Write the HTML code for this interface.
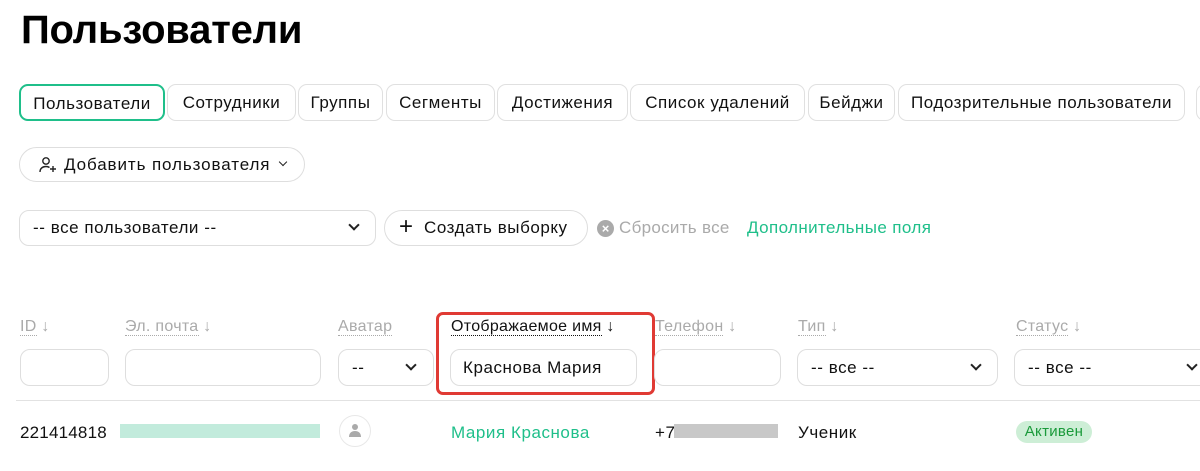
<!DOCTYPE html>
<html><head><meta charset="utf-8"><style>
*{box-sizing:border-box;margin:0;padding:0}
body{width:1200px;height:471px;overflow:hidden;background:#fff;font-family:"Liberation Sans",sans-serif;color:#111;position:relative;letter-spacing:0.55px}
.a{position:absolute;white-space:nowrap}
.tab{position:absolute;top:84px;height:37px;border:1px solid #e0e0e0;border-radius:9px;font-size:17px;line-height:35px;text-align:center}
.box{position:absolute;border:1px solid #dedede;border-radius:10px;background:#fff}
.h{position:absolute;top:318px;font-size:16px;color:#aaa;line-height:18px;letter-spacing:0.3px}
.h span{border-bottom:1px dotted #aaa}
.chev{position:absolute;width:8px;height:8px;border-right:2px solid #222;border-bottom:2px solid #222;transform:rotate(45deg)}
</style></head><body>
<div class="a" style="left:21px;top:6px;font-size:40px;font-weight:bold;line-height:48px;letter-spacing:-0.2px;color:#000">Пользователи</div>

<div class="tab" style="left:19px;width:146px;border:2px solid #1fbf8a">Пользователи</div>
<div class="tab" style="left:167px;width:129px">Сотрудники</div>
<div class="tab" style="left:298px;width:85px">Группы</div>
<div class="tab" style="left:386px;width:109px">Сегменты</div>
<div class="tab" style="left:497px;width:131px">Достижения</div>
<div class="tab" style="left:630px;width:175px">Список удалений</div>
<div class="tab" style="left:808px;width:87px">Бейджи</div>
<div class="tab" style="left:898px;width:287px">Подозрительные пользователи</div>
<div class="tab" style="left:1196px;width:40px"></div>

<div class="box" style="left:19px;top:147px;width:286px;height:35px;border-radius:18px"></div>
<svg class="a" style="left:38px;top:155px" width="20" height="20" viewBox="0 0 20 20" fill="none" stroke="#222" stroke-width="1.4"><circle cx="8" cy="6" r="3.2"/><path d="M2 17c0-3.5 2.5-5.5 6-5.5 1.5 0 2.5.3 3.5 1"/><path d="M15 11v6M12 14h6"/></svg>
<div class="a" style="left:64px;top:155px;font-size:17px;line-height:20px;letter-spacing:0.9px">Добавить пользователя</div>
<div class="chev" style="left:280px;top:159px;width:6px;height:6px;border-width:1.5px"></div>

<div class="box" style="left:19px;top:210px;width:357px;height:36px"></div>
<div class="a" style="left:33px;top:218px;font-size:17px;line-height:20px">-- все пользователи --</div>
<div class="chev" style="left:350px;top:221px"></div>
<div class="box" style="left:384px;top:210px;width:204px;height:36px;border-radius:18px"></div>
<div class="a" style="left:399px;top:214px;font-size:24px;line-height:26px;font-weight:300">+</div>
<div class="a" style="left:424px;top:218px;font-size:17px;line-height:20px">Создать выборку</div>
<div class="a" style="left:597px;top:220px;width:17px;height:17px;border-radius:50%;background:#aaa;color:#fff;font-size:13px;line-height:17px;text-align:center;font-weight:bold;letter-spacing:0">×</div>
<div class="a" style="left:619px;top:218px;font-size:17px;line-height:20px;color:#aaa;letter-spacing:0.3px">Сбросить все</div>
<div class="a" style="left:747px;top:218px;font-size:17px;line-height:20px;color:#1fbf8a;letter-spacing:0.4px">Дополнительные поля</div>

<div class="h" style="left:20px"><span>ID</span> ↓</div>
<div class="h" style="left:125px"><span>Эл. почта</span> ↓</div>
<div class="h" style="left:338px"><span>Аватар</span></div>
<div class="h" style="left:451px;color:#111"><span style="border-color:#111">Отображаемое имя</span> ↓</div>
<div class="h" style="left:655px"><span>Телефон</span> ↓</div>
<div class="h" style="left:798px"><span>Тип</span> ↓</div>
<div class="h" style="left:1016px"><span>Статус</span> ↓</div>

<div class="box" style="left:20px;top:349px;width:89px;height:37px"></div>
<div class="box" style="left:125px;top:349px;width:196px;height:37px"></div>
<div class="box" style="left:338px;top:349px;width:96px;height:37px"></div>
<div class="a" style="left:352px;top:358px;font-size:17px">--</div>
<div class="chev" style="left:407px;top:361px"></div>
<div class="a" style="left:436px;top:312px;width:219px;height:83px;border:3px solid #e03a34;border-radius:7px"></div>
<div class="box" style="left:450px;top:349px;width:187px;height:37px"></div>
<div class="a" style="left:463px;top:358px;font-size:17px">Краснова Мария</div>
<div class="box" style="left:654px;top:349px;width:127px;height:37px"></div>
<div class="box" style="left:797px;top:349px;width:201px;height:37px"></div>
<div class="a" style="left:811px;top:358px;font-size:17px">-- все --</div>
<div class="chev" style="left:972px;top:361px"></div>
<div class="box" style="left:1014px;top:349px;width:200px;height:37px"></div>
<div class="a" style="left:1028px;top:358px;font-size:17px">-- все --</div>
<div class="chev" style="left:1188px;top:361px"></div>

<div class="a" style="left:16px;top:400px;width:1184px;height:1px;background:#e2e2e2"></div>

<div class="a" style="left:20px;top:423px;font-size:17px;letter-spacing:0.2px">221414818</div>
<div class="a" style="left:120px;top:424px;width:200px;height:14px;background:#c2ebdc"></div>
<div class="a" style="left:339px;top:415px;width:32px;height:32px;border-radius:50%;border:1px solid #e8e8e8"></div>
<svg class="a" style="left:347px;top:422px" width="16" height="16" viewBox="0 0 16 16" fill="#aaa"><circle cx="8" cy="5" r="3"/><path d="M2 15c0-4 2.5-6 6-6s6 2 6 6z"/></svg>
<div class="a" style="left:451px;top:423px;font-size:17px;color:#1fbf8a">Мария Краснова</div>
<div class="a" style="left:655px;top:423px;font-size:17px">+7</div>
<div class="a" style="left:674px;top:424px;width:104px;height:14px;background:#c8c8c8"></div>
<div class="a" style="left:798px;top:423px;font-size:17px">Ученик</div>
<div class="a" style="left:1016px;top:421px;width:76px;height:22px;border-radius:11px;background:#cdeed6;color:#1a9a3a;font-size:15px;line-height:22px;text-align:center;letter-spacing:0.3px">Активен</div>
</body></html>
